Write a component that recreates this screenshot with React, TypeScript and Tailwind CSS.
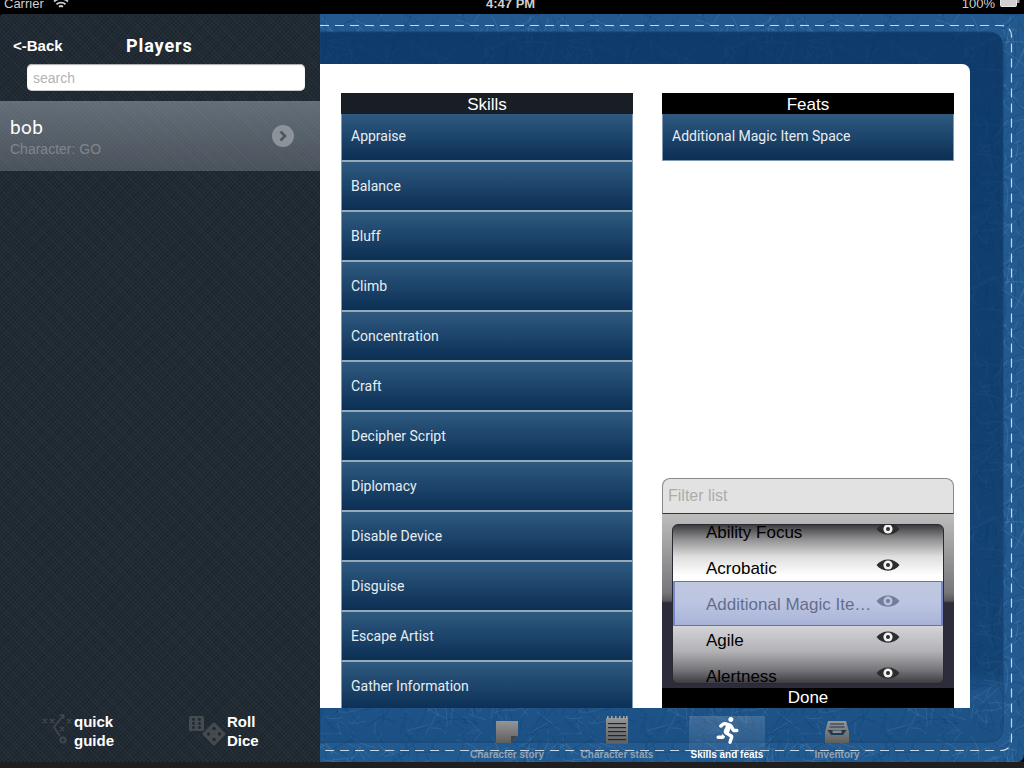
import React from 'react';
import { FaRunning } from 'react-icons/fa';

const SKILLS = [
  'Appraise',
  'Balance',
  'Bluff',
  'Climb',
  'Concentration',
  'Craft',
  'Decipher Script',
  'Diplomacy',
  'Disable Device',
  'Disguise',
  'Escape Artist',
  'Gather Information',
];

const PICKER_ROWS = ['Ability Focus', 'Acrobatic', 'Additional Magic Ite…', 'Agile', 'Alertness'];

// Small seeded generator so the leather cracks stay the same on every render
const makeCracks = () => {
  let seed = 17;
  const rnd = () => {
    seed = (seed * 16807) % 2147483647;
    return seed / 2147483647;
  };
  const cracks: string[] = [];
  for (let i = 0; i < 620; i++) {
    const x = rnd() * 240;
    const y = rnd() * 240;
    const a = rnd() * 6.28;
    const len = 10 + rnd() * 22;
    const bend = (rnd() - 0.5) * 10;
    const x2 = x + Math.cos(a) * len;
    const y2 = y + Math.sin(a) * len;
    cracks.push(`M${x.toFixed(1)} ${y.toFixed(1)}Q${((x + x2) / 2 + bend).toFixed(1)} ${((y + y2) / 2 - bend).toFixed(1)} ${x2.toFixed(1)} ${y2.toFixed(1)}`);
  }
  return cracks;
};

const CRACKS = makeCracks();

const Leather = () => (
  <svg className="absolute inset-0" width="704" height="748" viewBox="0 0 704 748">
    <defs>
      <pattern id="cracks" width="240" height="240" patternUnits="userSpaceOnUse">
        {CRACKS.map((d, i) => (
          <path key={i} d={d} fill="none" stroke={i % 2 === 0 ? '#5f90bd' : '#0f3f6d'} strokeOpacity={i % 2 === 0 ? 0.42 : 0.6} strokeWidth="0.7" />
        ))}
      </pattern>
      <linearGradient id="inner" x1="0" y1="0" x2="0" y2="1">
        <stop offset="0" stopColor="#062f5c" stopOpacity="0.72" />
        <stop offset="0.9" stopColor="#062f5c" stopOpacity="0.5" />
        <stop offset="0.93" stopColor="#062f5c" stopOpacity="0.12" />
        <stop offset="1" stopColor="#062f5c" stopOpacity="0.2" />
      </linearGradient>
    </defs>
    <path d="M0 0H704V740Q704 748 696 748H0Z" fill="#22598f" />
    <rect width="704" height="748" fill="url(#cracks)" />
    <path d="M0 18H668Q683 18 683 33V713Q683 728 668 728H0Z" fill="url(#inner)" stroke="#174672" strokeWidth="1" />
    <path d="M0 11.5H680Q691.5 11.5 691.5 23V725Q691.5 736.5 680 736.5H0" fill="none" stroke="#c8d6e4" strokeWidth="1.2" strokeDasharray="9 6" />
  </svg>
);

const WifiIcon = () => (
  <svg width="16" height="12" viewBox="0 0 16 12" className="ml-[9px] -mt-[1px]" fill="none" stroke="#d0d0d0" strokeWidth="1.8">
    <path d="M1 3.5C5 0 11 0 15 3.5" />
    <path d="M3.5 6.2C6 4 10 4 12.5 6.2" />
    <path d="M6 8.8C7 8 9 8 10 8.8" />
  </svg>
);

const BatteryIcon = () => (
  <svg width="20" height="7" viewBox="0 0 20 7" className="ml-[5px]">
    <rect x="0.5" y="-4" width="16" height="10.5" rx="1" fill="#cfcfcf" stroke="#e6e6e6" />
    <rect x="17" y="-2" width="2.5" height="5" fill="#9b9b9b" />
  </svg>
);

const PlaybookIcon = () => (
  <svg width="32" height="34" viewBox="0 0 32 34" fill="none" stroke="#41464b" strokeWidth="1.7">
    <path d="M1 5l4 4m0-4l-4 4M8 5l4 4m0-4l-4 4M25 5l4 4m0-4l-4 4M18 13l4 4m0-4l-4 4" />
    <path d="M21 2L12 13l6 9" />
    <path d="M17.5 1.5l4-0.5 0 4" />
    <circle cx="21" cy="26" r="2.6" strokeWidth="2" />
  </svg>
);

const DiceIcon = () => (
  <svg width="38" height="31" viewBox="0 0 38 31">
    <rect x="0" y="0" width="15" height="15" rx="1.5" fill="#454a4f" />
    {[3.5, 7.5, 11.5].map((y) =>
      [4.5, 10.5].map((x) => <circle key={`${x}-${y}`} cx={x} cy={y} r="1.4" fill="#20292f" />),
    )}
    <rect x="16.5" y="9.5" width="17" height="17" rx="1.5" fill="#454a4f" transform="rotate(45 25 18)" />
    <circle cx="25" cy="12.5" r="1.7" fill="#20292f" />
    <circle cx="25" cy="23.5" r="1.7" fill="#20292f" />
    <circle cx="19.5" cy="18" r="1.7" fill="#20292f" />
    <circle cx="30.5" cy="18" r="1.7" fill="#20292f" />
  </svg>
);

const EyeIcon = () => (
  <svg width="24" height="16" viewBox="0 0 24 16">
    <path d="M0.5 8C6 0.5 18 0.5 23.5 8C18 15.5 6 15.5 0.5 8Z" fill="#2d2d2d" />
    <circle cx="12" cy="8" r="4.6" fill="#f2f2f2" />
    <circle cx="12" cy="8" r="2" fill="#2d2d2d" />
  </svg>
);

const GRAY_DEFS = (id: string) => (
  <defs>
    <linearGradient id={id} x1="0" y1="0" x2="0" y2="1">
      <stop offset="0" stopColor="#959595" />
      <stop offset="1" stopColor="#5e5e5e" />
    </linearGradient>
  </defs>
);

const NoteIcon = () => (
  <svg width="24" height="24" viewBox="0 0 24 24">
    {GRAY_DEFS('note')}
    <path d="M1 1H23V16L16 23H1Z" fill="url(#note)" />
    <path d="M23 16L16 23V16Z" fill="#3d4650" />
  </svg>
);

const PadIcon = () => (
  <svg width="24" height="28" viewBox="0 0 24 28">
    {GRAY_DEFS('pad')}
    <rect x="1" y="2" width="22" height="26" rx="1" fill="url(#pad)" />
    {[2, 6, 10, 14, 18, 21].map((x) => (
      <rect key={x} x={x} y="0" width="1.6" height="3" fill="#a5a5a5" />
    ))}
    {[7, 11, 15, 19, 23].map((y) => (
      <rect key={y} x="3" y={y} width="18" height="1.2" fill="#16293f" />
    ))}
  </svg>
);

const TrayIcon = () => (
  <svg width="26" height="24" viewBox="0 0 26 24">
    {GRAY_DEFS('tray')}
    <path d="M4 1H22L25 12V23H1V12Z" fill="url(#tray)" />
    <path d="M6 4H20M5.5 7H20.5" stroke="#1c3550" strokeWidth="1.2" />
    <path d="M3.5 10H22.5L19 15H7Z" fill="#1f3a57" />
    <path d="M8.5 10.5H17.5V13H8.5Z" fill="#8a8a8a" />
  </svg>
);

const TABS = [
  { label: 'Character story', icon: <NoteIcon />, active: false },
  { label: 'Character stats', icon: <PadIcon />, active: false },
  { label: 'Skills and feats', icon: <FaRunning className="text-white text-[27px]" />, active: true },
  { label: 'Inventory', icon: <TrayIcon />, active: false },
];

const rowClass =
  'flex items-center pl-[9px] text-[14px] text-[#e8edf2] border-x border-[#7f99b0] bg-gradient-to-b from-[#2f5a80] to-[#0b2f55] font-["Roboto",sans-serif]';

export default function App() {
  return (
    <div className="flex h-[768px] w-[1024px] flex-col overflow-hidden bg-black font-['Liberation_Sans',sans-serif]">
      {/* status bar, cut off at the top in the original capture */}
      <div className="relative flex h-[14px] shrink-0 items-start justify-between overflow-hidden px-[4px] text-[13px] leading-[14px] text-[#cfcfcf]">
        <div className="flex -mt-[3px] items-center">
          <span>Carrier</span>
          <WifiIcon />
        </div>
        <span className="absolute left-[486px] -top-[3px] font-bold">4:47 PM</span>
        <div className="flex -mt-[3px] items-start">
          <span>100%</span>
          <span className="mt-[3px]">
            <BatteryIcon />
          </span>
        </div>
      </div>

      <div className="flex min-h-0 flex-1">
        {/* left players panel */}
        <aside className="flex w-[320px] shrink-0 flex-col rounded-tl-[3px] bg-[#202a33] bg-[repeating-linear-gradient(45deg,#ffffff08_0,#ffffff08_1px,transparent_1px,transparent_3px),repeating-linear-gradient(-45deg,#00000020_0,#00000020_1px,transparent_1px,transparent_3px)]">
          <div className="flex h-[20px] mt-[22px] items-center pl-[13px]">
            <span className="w-[113px] text-[15px] font-bold text-white">&lt;-Back</span>
            <span className="-mt-[2px] font-['Roboto',sans-serif] text-[18px] font-bold tracking-[0.9px] text-white">Players</span>
          </div>
          <div className="ml-[27px] mt-[8px] flex h-[27px] w-[278px] items-center rounded-[5px] border-b border-[#c8c8c8] bg-white pl-[6px] pt-[2px] text-[14px] text-[#b3b3b3] shadow-[inset_0_1px_1px_#aaa]">
            search
          </div>
          <div className="relative mt-[10px] flex h-[70px] flex-col justify-center bg-gradient-to-b from-[#626d77] to-[#49515a] bg-[repeating-linear-gradient(45deg,#ffffff08_0,#ffffff08_1px,transparent_1px,transparent_3px),linear-gradient(#626d77,#49515a)] pl-[10px] pt-[2px]">
            <div className="font-['Roboto',sans-serif] text-[19px] leading-[24px] tracking-[0.4px] text-white">bob</div>
            <div className="text-[14px] leading-[18px] text-[#7f858c]">Character: GO</div>
            <div className="absolute left-[272px] top-[24px] flex h-[22px] w-[22px] items-center justify-center rounded-full bg-[#8c9299]">
              <svg width="8" height="12" viewBox="0 0 8 12" fill="none" stroke="#4f555b" strokeWidth="2.6">
                <path d="M1.5 1.5L6 6l-4.5 4.5" />
              </svg>
            </div>
          </div>
          <div className="flex-1" />
          <div className="flex h-[54px] items-start pt-[4px]">
            <div className="ml-[42px] flex w-[147px] items-start">
              <span className="block mt-[2px]">
                <PlaybookIcon />
              </span>
              <div className="text-[15px] font-bold leading-[19px] text-white">
                quick
                <br />
                guide
              </div>
            </div>
            <div className="flex items-start">
              <span className="block mt-[4px]">
                <DiceIcon />
              </span>
              <div className="text-[15px] font-bold leading-[19px] text-white">
                Roll
                <br />
                Dice
              </div>
            </div>
          </div>
        </aside>

        {/* leather book */}
        <main className="relative flex min-w-0 flex-1 flex-col">
          <Leather />
          <div className="relative flex min-h-0 flex-1 flex-col pr-[54px] pt-[50px]">
            <div className="flex min-h-0 flex-1 gap-[29px] overflow-hidden rounded-tr-[8px] bg-white pl-[21px] pt-[29px]">
              <section className="w-[292px] shrink-0">
                <div className="h-[21px] bg-[#191e25] text-center text-[17px] leading-[23px] text-white">Skills</div>
                {SKILLS.map((skill, i) => (
                  <div key={skill} className={`${rowClass} border-b-2 border-b-[#94aabb] ${i === 0 ? 'h-[48px] pb-[1px]' : 'h-[50px]'}`}>
                    {skill}
                  </div>
                ))}
              </section>

              <section className="flex w-[292px] shrink-0 flex-col">
                <div className="h-[21px] bg-black text-center text-[17px] leading-[23px] text-white">Feats</div>
                <div className={`${rowClass} h-[47px] border-b border-b-[#7f99b0] pb-[2px]`}>Additional Magic Item Space</div>
                <div className="flex-1" />
                <div className="flex h-[36px] items-center rounded-t-[8px] border-x border-t border-[#8a8a8a] border-b-[#333] border-b bg-[#e2e2e2] pl-[5px] text-[16px] text-[#acacac]">
                  Filter list
                </div>
                <div className="relative h-[174px] bg-[linear-gradient(#bdbdbd_0%,#77777b_45%,#56565c_50%,#2c2c3a_51%,#2c2c3a_100%)] px-[10px] pt-[10px]">
                  <div className="relative h-[160px] overflow-hidden rounded-[6px] border border-[#2a2a33] bg-[linear-gradient(#3c3c3e_0%,#8f8f91_9%,#dedede_20%,#ffffff_32%,#ffffff_50%,#d2d2d6_65%,#b2b2b6_80%,#737378_92%,#3c3c42_100%)]">
                    <div className="-mt-[10px]">
                      {PICKER_ROWS.map((row) => (
                        <div key={row} className="flex h-[36px] items-center pl-[33px] text-[17px] text-black">
                          <span className="w-[170px] whitespace-nowrap">{row}</span>
                          <span className="-mt-[9px] block">
                            <EyeIcon />
                          </span>
                        </div>
                      ))}
                    </div>
                    <div className="absolute inset-x-0 top-[56px] h-[45px] border-y border-[#6f7488] border-x-2 border-x-[#5f6fc0]/70 bg-[linear-gradient(#9eaacfa6,#8f9fd4a6)]" />
                  </div>
                </div>
                <div className="h-[20px] shrink-0 bg-black text-center text-[17px] leading-[20px] text-white">Done</div>
              </section>
            </div>
          </div>

          {/* tab bar sits over the stitched edge */}
          <nav className="relative flex h-[54px] shrink-0 justify-center">
            {TABS.map((tab) => (
              <div key={tab.label} className="flex w-[110px] flex-col items-center pt-[8px]">
                <div className={`flex h-[36px] w-[76px] items-end justify-center pb-[8px] ${tab.active ? 'bg-gradient-to-b from-[#ffffff28] to-[#ffffff0c]' : ''}`}>
                  {tab.icon}
                </div>
                <div className={`-mt-[3px] whitespace-nowrap text-[10px] font-bold leading-[12px] ${tab.active ? 'text-white' : 'text-[#93a3b2]'}`}>
                  {tab.label}
                </div>
              </div>
            ))}
          </nav>
        </main>
      </div>
      <div className="h-[6px] shrink-0 bg-[#1f1f20]" />
    </div>
  );
}
